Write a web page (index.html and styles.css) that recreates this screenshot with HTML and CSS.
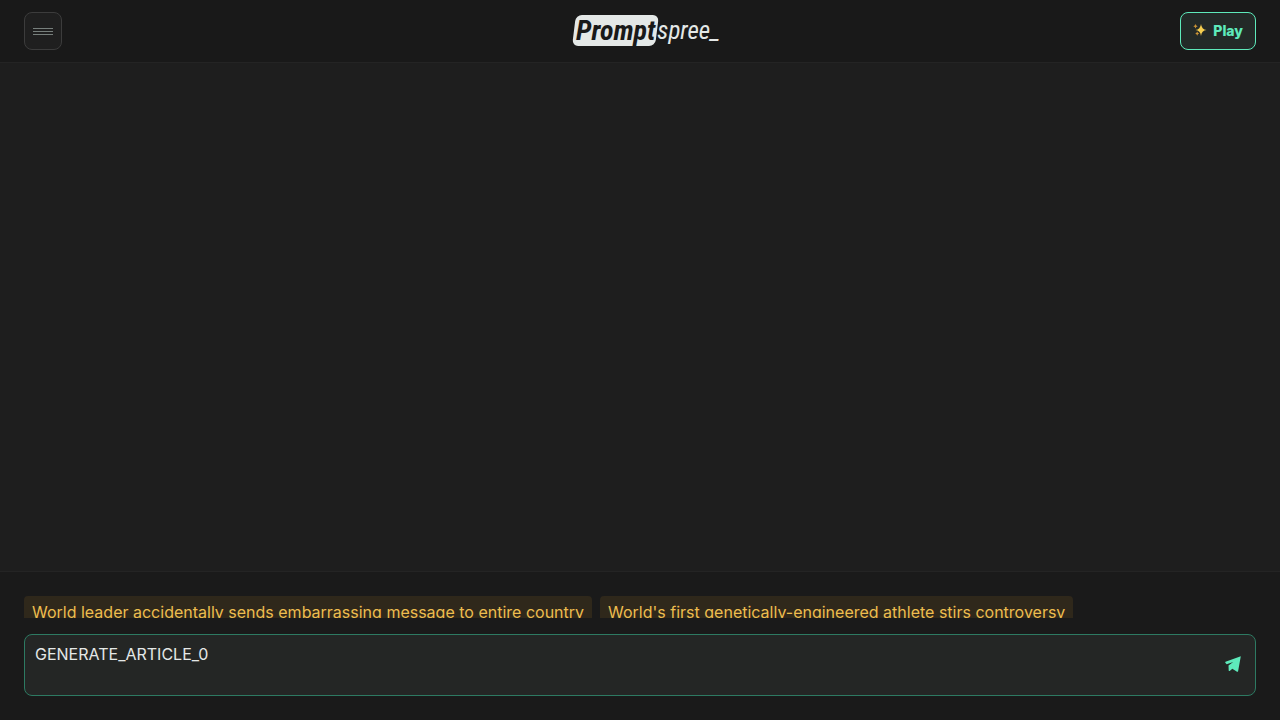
FILE: index.html
```html
<!DOCTYPE html>
<html lang="en">
<head>
<meta charset="utf-8">
<meta name="viewport" content="width=device-width, initial-scale=1">
<title>Promptspree</title>
<link rel="stylesheet" href="styles.css">
</head>
<body>
<header class="topbar">
  <button class="menu-button" type="button" aria-label="Menu"><span class="menu-lines"></span></button>
  <a class="logo" href="#"><span class="logo-badge">Prompt</span><span class="logo-tail">spree_</span></a>
  <button class="play-button" type="button">
    <svg class="sparkles" viewBox="0 0 14 14" aria-hidden="true">
      <path class="spark-main" d="M8 1 Q8.600 6.400 13.500 7 Q8.600 7.600 8 13 Q7.400 7.600 2.500 7 Q7.400 6.400 8 1Z"/>
      <path class="spark-small" d="M2.500 1 Q2.900 2.800 4.700 3.300 Q2.900 3.800 2.500 5.600 Q2.100 3.800 .3 3.300 Q2.100 2.800 2.500 1Z"/>
      <path class="spark-small" d="M4.200 8.500 Q4.600 10.100 6.200 10.600 Q4.600 11.100 4.200 12.700 Q3.800 11.100 2.200 10.600 Q3.800 10.100 4.200 8.500Z"/>
    </svg>
    <span>Play</span>
  </button>
</header>
<main class="stage"></main>
<footer class="composer">
  <div class="suggestions">
    <button class="suggestion" type="button">World leader accidentally sends embarrassing message to entire country</button>
    <button class="suggestion" type="button">World's first genetically-engineered athlete stirs controversy</button>
  </div>
  <form class="prompt">
    <textarea class="prompt-input" aria-label="Prompt" rows="1">GENERATE_ARTICLE_0</textarea>
    <button class="send-button" type="button" aria-label="Send">
      <svg class="send-icon" viewBox="0 0 16 16" aria-hidden="true">
        <path d="M15.800 .2 L.5 5.800 Q0 6.200 .3 6.700 L1.700 8.300 L8.200 6.100 L3.500 9.400 L3.700 14.500 Q4 15.300 4.700 14.900 L7.300 12.800 L12 15.700 Q12.900 16 13.100 15.200Z"/>
      </svg>
    </button>
  </form>
</footer>
</body>
</html>
```
FILE: styles.css
```css
* { box-sizing: border-box; }
body {
  margin: 0;
  min-height: 100vh;
  display: flex;
  flex-direction: column;
  background: #1e1e1e;
  color: #e4e8e7;
  font-family: Inter, "Liberation Sans", sans-serif;
  font-size: 16px;
}
button, textarea { font: inherit; margin: 0; }
.topbar {
  display: grid;
  grid-template-columns: 1fr auto 1fr;
  align-items: center;
  padding: 12px 24px;
  background: #191919;
  border-bottom: 1px solid #242424;
}
.menu-button {
  display: grid;
  place-items: center;
  width: 38px;
  height: 38px;
  padding: 0;
  background: #1f1f1f;
  border: 1px solid #3c3c3c;
  border-radius: 8px;
}
.menu-lines {
  width: 20px;
  height: 7px;
  border: solid #777f7c;
  border-width: 1px 0;
  background: linear-gradient(#777f7c, #777f7c) center / 100% 1px no-repeat;
}
.logo {
  display: flex;
  align-items: center;
  padding: 0 0 2px 14px;
  color: #e4e8e7;
  font-family: "Roboto Condensed", "Liberation Sans Narrow", "Open Sans Condensed", "Liberation Sans", sans-serif;
  font-size: 28px;
  font-style: italic;
  line-height: 31px;
  text-decoration: none;
}
.logo-badge {
  position: relative;
  z-index: 0;
  padding: 0 2px;
  color: #191919;
  font-weight: 700;
}
.logo-badge::before {
  content: "";
  position: absolute;
  z-index: -1;
  inset: 0;
  background: #e4e8e7;
  border-radius: 6px;
  transform: skewX(-7deg);
}
.logo-tail { font-size: 25px; }
.play-button {
  justify-self: end;
  display: flex;
  align-items: center;
  gap: 6px;
  height: 38px;
  padding: 0 12px 2px;
  background: #232a28;
  border: 1px solid #5eeabb;
  border-radius: 8px;
  color: #5eeabb;
  font-size: 14px;
  font-weight: 800;
}
.sparkles { width: 14px; height: 14px; }
.spark-main { fill: #f5cf50; }
.spark-small { fill: #c99235; }
.stage { flex: 1; }
.composer {
  display: flex;
  flex-direction: column;
  gap: 16px;
  padding: 24px;
  background: #1a1a1a;
  border-top: 1px solid #242424;
}
.suggestions {
  display: flex;
  gap: 8px;
  height: 22px;
  overflow: hidden;
}
.suggestion {
  flex: none;
  height: 34px;
  padding: 0 8px 2px;
  background: #2f281b;
  border: 0;
  border-radius: 4px;
  color: #edbd4f;
  white-space: nowrap;
}
.prompt {
  display: flex;
  align-items: center;
  background: #242625;
  border: 1px solid #2d7a62;
  border-radius: 8px;
}
.prompt-input {
  flex: 1;
  height: 60px;
  padding: 7px 10px;
  background: none;
  border: 0;
  outline: 0;
  resize: none;
  color: #e4e8e7;
  line-height: 24px;
}
.send-button {
  display: flex;
  padding: 8px 14px 10px;
  background: none;
  border: 0;
}
.send-icon { width: 16px; height: 16px; fill: #5eeabb; }
```
